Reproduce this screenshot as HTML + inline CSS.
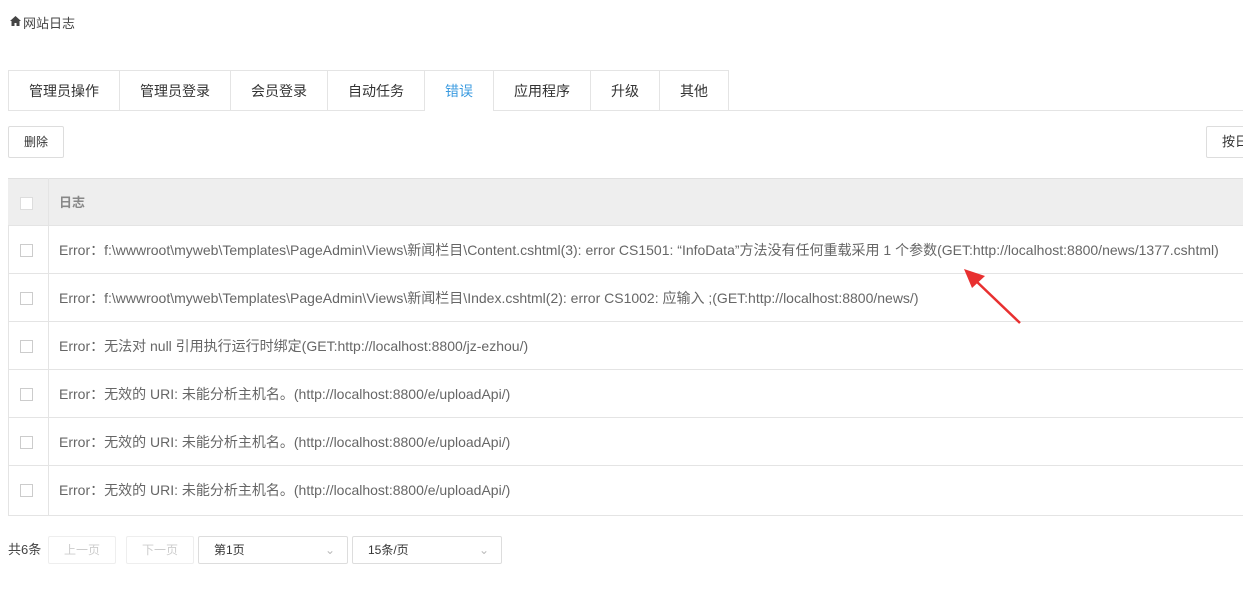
<html><head><style>
body{margin:0;width:1243px;height:592px;overflow:hidden;background:#fff;font-family:"Liberation Sans","Noto Sans CJK SC",sans-serif;color:#555;font-size:14px;position:relative}
.a{position:absolute}
.tab{position:absolute;top:70px;height:40px;line-height:40px;text-align:center;border:1px solid #e4e4e4;border-bottom:none;box-sizing:border-box;color:#333;background:#fff}
.row{position:absolute;left:8px;width:1240px;height:48px;border-bottom:1px solid #e4e4e4;box-sizing:border-box}
.cb{position:absolute;left:12px;top:18px;width:11px;height:11px;border:1px solid #ccc;background:#fff}
.row .t{position:absolute;left:51px;top:0;line-height:48px;white-space:nowrap;color:#666}
.pg{position:absolute;top:536px;height:28px;border:1px solid #ddd;border-radius:2px;box-sizing:border-box;line-height:26px;font-size:12px}
</style></head><body>
<svg class="a" style="left:10px;top:16px" width="11" height="10" viewBox="0 0 11 10"><path d="M5.5 0 L11 5 L9.5 5 L9.5 10 L6.5 10 L6.5 7 L4.5 7 L4.5 10 L1.5 10 L1.5 5 L0 5 Z" fill="#444"/></svg>
<div class="a" style="left:23px;top:13px;font-size:13px;color:#444">网站日志</div>
<div class="a" style="left:8px;top:110px;width:1235px;border-top:1px solid #e4e4e4"></div>
<div class="tab" style="left:8px;width:112px">管理员操作</div>
<div class="tab" style="left:119px;width:112px">管理员登录</div>
<div class="tab" style="left:230px;width:98px">会员登录</div>
<div class="tab" style="left:327px;width:98px">自动任务</div>
<div class="tab" style="left:424px;width:70px;color:#3b9be0;height:41px">错误</div>
<div class="tab" style="left:493px;width:98px">应用程序</div>
<div class="tab" style="left:590px;width:70px">升级</div>
<div class="tab" style="left:659px;width:70px">其他</div>
<div class="a" style="left:8px;top:126px;width:56px;height:32px;border:1px solid #ddd;border-radius:2px;box-sizing:border-box;line-height:30px;text-align:center;font-size:12px;color:#333">删除</div>
<div class="a" style="left:1206px;top:126px;width:60px;height:32px;border:1px solid #ddd;border-radius:2px;box-sizing:border-box;line-height:30px;padding-left:15px;font-size:13px;color:#333">按日</div>
<div class="a" style="left:8px;top:178px;width:1240px;height:338px;border:1px solid #e4e4e4;border-right:none;box-sizing:border-box"></div>
<div class="row" style="top:178px;background:#eee;border-top:1px solid #e0e0e0"><div class="cb" style="border-color:#ddd"></div><div class="t" style="color:#888;font-weight:bold;font-size:13px">日志</div></div>
<div class="row" style="top:226px"><div class="cb"></div><div class="t">Error：f:\wwwroot\myweb\Templates\PageAdmin\Views\新闻栏目\Content.cshtml(3): error CS1501: “InfoData”方法没有任何重载采用 1 个参数(GET:http://localhost:8800/news/1377.cshtml)</div></div>
<div class="row" style="top:274px"><div class="cb"></div><div class="t">Error：f:\wwwroot\myweb\Templates\PageAdmin\Views\新闻栏目\Index.cshtml(2): error CS1002: 应输入 ;(GET:http://localhost:8800/news/)</div></div>
<div class="row" style="top:322px"><div class="cb"></div><div class="t">Error：无法对 null 引用执行运行时绑定(GET:http://localhost:8800/jz-ezhou/)</div></div>
<div class="row" style="top:370px"><div class="cb"></div><div class="t">Error：无效的 URI: 未能分析主机名。(http://localhost:8800/e/uploadApi/)</div></div>
<div class="row" style="top:418px"><div class="cb"></div><div class="t">Error：无效的 URI: 未能分析主机名。(http://localhost:8800/e/uploadApi/)</div></div>
<div class="row" style="top:466px;border-bottom:none"><div class="cb"></div><div class="t">Error：无效的 URI: 未能分析主机名。(http://localhost:8800/e/uploadApi/)</div></div>
<div class="a" style="left:48px;top:178px;height:337px;border-left:1px solid #e4e4e4"></div>
<svg class="a" style="left:0;top:0" width="1243" height="592"><line x1="1020" y1="323" x2="975" y2="280" stroke="#e83030" stroke-width="2.5"/><polygon points="964,269 985,276 972,288" fill="#e83030"/></svg>
<div class="a" style="left:8px;top:536px;line-height:28px;font-size:13px;color:#444">共6条</div>
<div class="pg" style="left:48px;width:68px;text-align:center;color:#ccc;border-color:#eee">上一页</div>
<div class="pg" style="left:126px;width:68px;text-align:center;color:#ccc;border-color:#eee">下一页</div>
<div class="pg" style="left:198px;width:150px;padding-left:15px;color:#333">第1页<span style="position:absolute;right:12px;color:#bbb">&#8964;</span></div>
<div class="pg" style="left:352px;width:150px;padding-left:15px;color:#333">15条/页<span style="position:absolute;right:12px;color:#bbb">&#8964;</span></div>
</body></html>
